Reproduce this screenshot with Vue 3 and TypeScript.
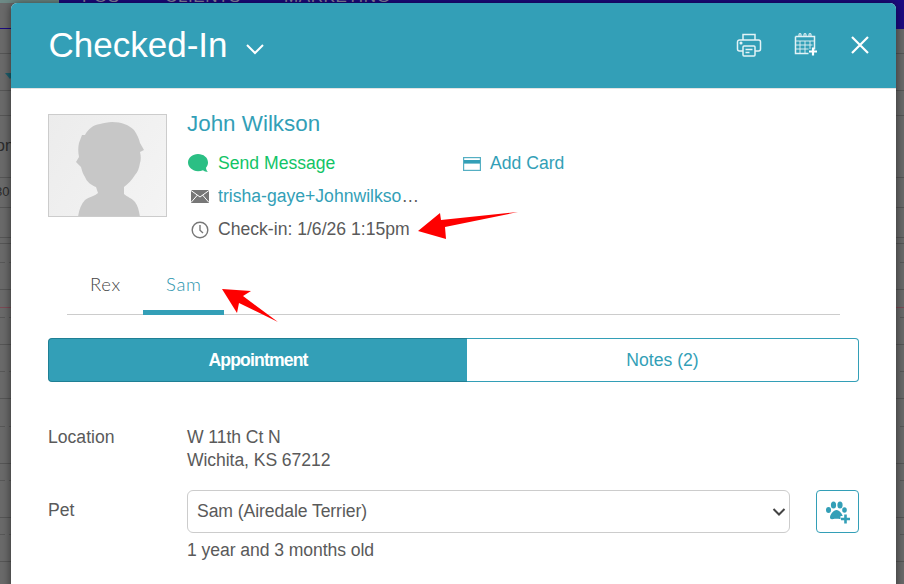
<script setup lang="ts">
const navItems = ['POS', 'CLIENTS', 'MARKETING']
const pets = ['Rex', 'Sam']
const activePet = 'Sam'
// row lines of the page behind the dialog
const solidLines = [53, 90, 115, 177, 207, 237, 243, 289, 344, 398, 463, 517, 561]
const dashLines = [262, 317, 371, 426, 480, 534]
</script>

<template>
  <div class="page">
    <div class="backdrop">
      <div class="nav">
        <span class="logo"></span>
        <span v-for="item in navItems" :key="item" class="nav-item">{{ item }}</span>
      </div>
      <i v-for="y in solidLines" :key="y" class="line" :style="{ top: y + 'px' }"></i>
      <i v-for="y in dashLines" :key="y" class="line dash" :style="{ top: y + 'px' }"></i>
      <i class="line red"></i>
      <span class="bg-text t1">on</span>
      <span class="bg-text t2">30</span>
      <i class="notch"></i>
    </div>

    <div class="modal">
      <header class="head">
        <h1>Checked-In</h1>
        <svg class="chev" width="20" height="12" viewBox="0 0 20 12"><path d="M2 2l8 8 8-8" fill="none" stroke="#fff" stroke-width="2" /></svg>
        <div class="head-icons">
          <svg width="26" height="26" viewBox="0 0 26 26" fill="none" stroke="#e4f3f6" stroke-width="1.5">
            <path d="M7 8V2.500h12V8" />
            <path d="M7 19H3.500A2 2 0 0 1 1.500 17v-7a2 2 0 0 1 2-2h19a2 2 0 0 1 2 2v7a2 2 0 0 1-2 2H19" />
            <rect x="7" y="14" width="12" height="10" rx="1" />
            <path d="M9.500 17.500h7M9.500 20.500h4" />
            <circle cx="5" cy="11" r=".8" fill="#e4f3f6" />
          </svg>
          <svg width="24" height="25" viewBox="0 0 24 25" fill="none" stroke="#e4f3f6">
            <path d="M1.500 4.500h19v13M1.500 4.500v17h13" stroke-width="1.500" />
            <path d="M1.500 9h19M1.500 13h17M1.500 17h13M6 9v12M11 9v12M16 9v8" stroke-width=".9" />
            <path d="M5 5V2.500a1 1 0 0 1 2 0V5M10 5V2.500a1 1 0 0 1 2 0V5M15 5V2.500a1 1 0 0 1 2 0V5" stroke-width="1.100" />
            <path d="M19 15.500v8M15 19.500h8" stroke="#fff" stroke-width="2.200" />
          </svg>
          <svg width="20" height="20" viewBox="0 0 20 20"><path d="M2 2l16 16M18 2L2 18" stroke="#fff" stroke-width="2.200" /></svg>
        </div>
      </header>

      <div class="body">
        <section class="profile">
          <div class="avatar">
            <svg width="117" height="101" viewBox="0 0 117 101">
              <path fill="#c7c7c7" d="M29 102c1-7 3-13 7-17 4-3 10-4 13-7l-2-6c-5-2-9-5-11-10-2-3-3-6-4-10l-5-5 3-5c-1-5-1-10 0-14l3-8 3 0c3-6 8-10 15-11 4-1 8-2 12-2 10 0 17 3 22 8 3 4 5 9 6 13l4 7-4 2c1 4 1 8 0 11-1 5-2 9-5 12-3 5-7 9-11 12l0 7c3 3 8 4 11 8 3 4 4 9 5 15z" />
            </svg>
          </div>
          <div class="info">
            <a class="name">John Wilkson</a>
            <div class="row first">
              <div class="cell msg">
                <span class="ico">
                  <svg width="20" height="19" viewBox="0 0 20 19"><path fill="#2bbf84" d="M10 0c5.500 0 10 3.500 10 8.500 0 2.100-.7 3.800-2 5.200.1 1.600.8 3.200 2 4.300-2 0-3.600-.6-5-1.700-1.500.6-3.200.9-5 .9C4.500 17 0 13.300 0 8.500S4.500 0 10 0z" /></svg>
                </span>
                <span class="green">Send Message</span>
              </div>
              <div class="cell">
                <svg class="card" width="18" height="14" viewBox="0 0 18 14"><rect x=".6" y=".6" width="16.800" height="12.800" fill="none" stroke="#55afc3" stroke-width="1.200" /><rect x="1" y="3" width="16" height="3.600" fill="#339fb7" /></svg>
                <span class="teal">Add Card</span>
              </div>
            </div>
            <div class="row">
              <span class="ico">
                <svg width="18" height="13" viewBox="0 0 18 13"><path fill="#777" d="M0 0h18v13H0z" /><path d="M0 .5l9 6.500 9-6.500M0 12.500l6.500-7.500M18 12.500L11.500 5" fill="none" stroke="#fff" stroke-width="1" /></svg>
              </span>
              <span class="email"><span class="teal">trisha-gaye+Johnwilkson@gmail.com</span></span>
            </div>
            <div class="row">
              <span class="ico">
                <svg width="18" height="18" viewBox="0 0 18 18" fill="none" stroke="#777" stroke-width="1.400"><circle cx="9" cy="9" r="7.800" /><path d="M9 4v5.300l3 2.700" /></svg>
              </span>
              <span>Check-in: 1/6/26 1:15pm</span>
            </div>
          </div>
        </section>

        <nav class="tabs">
          <a v-for="pet in pets" :key="pet" class="tab" :class="{ on: pet === activePet }">{{ pet }}</a>
        </nav>

        <div class="switch">
          <button class="active">Appointment</button>
          <button>Notes (2)</button>
        </div>

        <div class="field loc">
          <label>Location</label>
          <div class="val">W 11th Ct N<br />Wichita, KS 67212</div>
        </div>
        <div class="field pet">
          <label>Pet</label>
          <div class="val">
            <div class="pick">
              <div class="select-wrap">
                <select>
                  <option>Sam (Airedale Terrier)</option>
                  <option>Rex</option>
                </select>
                <svg class="caret" width="14" height="8" viewBox="0 0 14 8"><path d="M1.500 1l5.500 5.500L12.500 1" fill="none" stroke="#444" stroke-width="2" /></svg>
              </div>
              <button class="add">
                <svg width="26" height="24" viewBox="0 0 26 24" fill="#339fb7">
                  <ellipse cx="3.500" cy="10" rx="2.500" ry="3" />
                  <ellipse cx="8.500" cy="5" rx="2.600" ry="3.500" />
                  <ellipse cx="15" cy="5" rx="2.600" ry="3.500" />
                  <ellipse cx="19.500" cy="10" rx="2.300" ry="2.800" />
                  <path d="M11.500 10c3 0 6 4 6.500 7 .2 2-1.500 2.500-3 2-1.500-.4-5.500-.4-7 0-1.500.5-3.200 0-3-2 .5-3 3.500-7 6.500-7z" />
                  <path d="M20.500 13.500v10M15.500 18.500h10" stroke="#fff" stroke-width="5" />
                  <path d="M20.500 14.500v9M16 19h9" stroke="#339fb7" stroke-width="2.600" />
                </svg>
              </button>
            </div>
            <div class="age">1 year and 3 months old</div>
          </div>
        </div>
      </div>
    </div>

    <!-- red annotation arrows over the screenshot -->
    <svg class="arrows" width="904" height="584" viewBox="0 0 904 584">
      <path fill="#fe0000" d="M418 231l22-18 1 7 77-8-73 15 1 12z" />
      <path fill="#fe0000" d="M222 289l29 2-8 5 35 26-39-19-2 10z" />
    </svg>
  </div>
</template>

<style>
html,
body {
  margin: 0;
  height: 100%;
  overflow: hidden;
}
</style>

<style scoped>
.page {
  position: relative;
  width: 904px;
  height: 584px;
  overflow: hidden;
  font-family: "Liberation Sans", Arial, sans-serif;
  font-size: 17.6px;
  color: #5a5a5a;
  background: #6a6a6a;
}
.backdrop {
  position: absolute;
  inset: 0;
}
.nav {
  height: 29px;
  box-sizing: border-box;
  background: #1c0a82;
  display: flex;
  position: relative;
  overflow: hidden;
}
.logo {
  width: 59px;
  background: linear-gradient(#6d8a86 0 3px, #6a6a6a 3px 28px, #1c0a82 28px);
}
.nav-item {
  position: absolute;
  top: -13px;
  font-size: 17px;
  line-height: 20px;
  letter-spacing: 0.6px;
  color: #8d8ca8;
}
.nav-item:nth-of-type(2) { left: 82px; }
.nav-item:nth-of-type(3) { left: 165px; }
.nav-item:nth-of-type(4) { left: 284px; }
.line {
  position: absolute;
  left: 0;
  right: 0;
  height: 1px;
  background: #565656;
}
.line.dash {
  background: repeating-linear-gradient(90deg, #585858 0 5px, transparent 5px 9px);
}
.line.red {
  top: 307px;
  background: #7d4a55;
}
.bg-text {
  position: absolute;
  left: -6px;
  font-size: 16px;
  color: #2c2c2c;
}
.t1 { top: 137px; left: -4px; }
.t2 { top: 184px; font-size: 13px; left: -5px; }
.notch {
  position: absolute;
  top: 73px;
  left: 5px;
  border: 5px solid transparent;
  border-top: 6px solid #1d5f6d;
}

.modal {
  position: absolute;
  top: 3px;
  left: 11px;
  width: 885px;
  height: 620px;
  background: #fff;
  border-radius: 6px 6px 0 0;
  box-shadow: 0 0 10px rgba(0, 0, 0, 0.55);
}
.head {
  height: 86px;
  box-sizing: border-box;
  background: #339fb7;
  border-bottom: 1px solid #e3e3e3;
  border-radius: 6px 6px 0 0;
  padding: 0 26px 2px 37.500px;
  display: flex;
  align-items: center;
  color: #fff;
}
.head h1 {
  margin: 0;
  font-size: 35px;
  font-weight: 400;
}
.chev {
  margin: 8px 0 0 18px;
}
.head-icons {
  margin-left: auto;
  display: flex;
  align-items: center;
  gap: 32px;
}
.body {
  padding: 25px 37px 0;
}
.profile {
  display: flex;
  gap: 20px;
}
.avatar {
  width: 117px;
  height: 101px;
  border: 1px solid #ccc;
  background: linear-gradient(120deg, #ececec, #f4f4f4);
  flex: none;
  overflow: hidden;
}
.avatar svg {
  display: block;
}
.info {
  min-width: 0;
  margin-top: -3px;
}
.name {
  display: block;
  font-size: 22.4px;
  line-height: 26px;
  color: #339fb7;
}
.row {
  display: flex;
  align-items: center;
  height: 33px;
}
.row.first {
  margin-top: 10px;
}
.cell {
  display: flex;
  align-items: center;
}
.msg {
  width: 276px;
}
.ico {
  width: 31px;
  flex: none;
  display: flex;
  align-items: center;
  padding-left: 4px;
  box-sizing: border-box;
}
.msg .ico {
  padding-left: 1px;
}
.card {
  margin-right: 9px;
}
.green {
  color: #12c466;
}
.teal {
  color: #339fb7;
}
.email {
  width: 201px;
  white-space: nowrap;
  overflow: hidden;
  text-overflow: ellipsis;
}
.tabs {
  margin: 17px 19px 0;
  height: 52px;
  box-sizing: border-box;
  border-bottom: 1px solid #ccc;
  display: flex;
}
.tab {
  font-family: Lato, sans-serif;
  font-size: 18.500px;
  font-weight: 300;
  letter-spacing: 0.7px;
  padding: 10px 22px 0 23px;
  height: 52px;
  box-sizing: border-box;
  color: #444;
}
.tab.on {
  color: #2a94ad;
  border-bottom: 5px solid #339fb7;
}
.switch {
  margin-top: 23px;
  display: flex;
  height: 44px;
}
.switch button {
  flex: 1;
  margin: 0;
  font: inherit;
  color: #339fb7;
  background: #fff;
  border: 1px solid #339fb7;
  border-left: none;
  border-radius: 0 4px 4px 0;
}
.switch button.active {
  flex: none;
  width: 419px;
  font-weight: 700;
  letter-spacing: -0.85px;
  color: #fff;
  background: #339fb7;
  border: 1px solid #1f7f94;
  border-right: none;
  border-radius: 4px 0 0 4px;
}
.field {
  display: flex;
  line-height: 23px;
}
.field label {
  width: 139px;
  flex: none;
}
.val {
  flex: 1;
  letter-spacing: -0.08px;
}
.loc {
  margin-top: 44px;
}
.pet {
  margin-top: 18px;
}
.pet label {
  margin-top: 9px;
}
.pick {
  display: flex;
  justify-content: space-between;
}
.select-wrap {
  position: relative;
  height: 43px;
}
select {
  appearance: none;
  display: block;
  width: 603px;
  height: 43px;
  padding: 0 9px;
  font: inherit;
  letter-spacing: -0.08px;
  color: #5a5a5a;
  background: #fff;
  border: 1px solid #ccc;
  border-radius: 6px;
}
.caret {
  position: absolute;
  top: 18px;
  right: 4.500px;
  pointer-events: none;
}
.add {
  width: 43px;
  height: 43px;
  padding: 0;
  background: #fff;
  border: 1px solid #339fb7;
  border-radius: 4px;
  display: flex;
  align-items: center;
  justify-content: center;
}
.age {
  margin-top: 6px;
}
.arrows {
  position: absolute;
  top: 0;
  left: 0;
  pointer-events: none;
}
</style>
